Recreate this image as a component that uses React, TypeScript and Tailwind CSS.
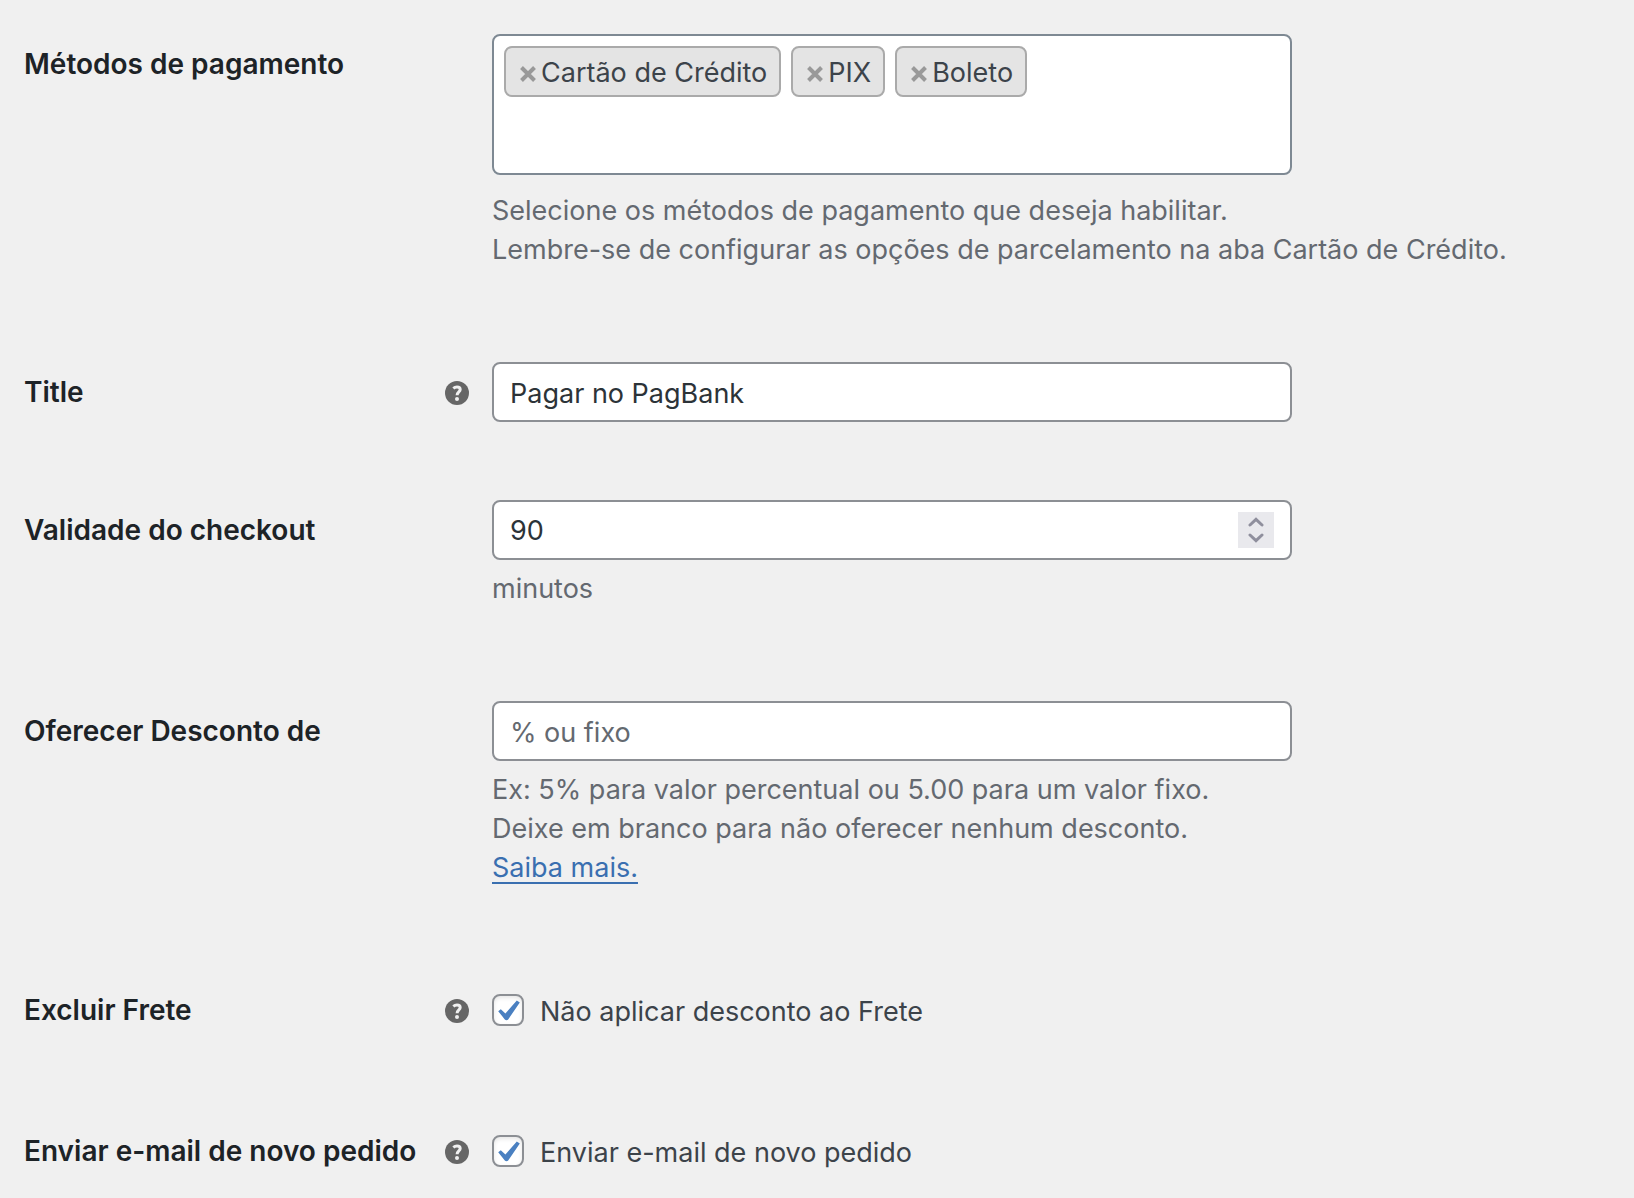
import { useState } from 'react';
import type { ReactNode } from 'react';

interface SettingRowProps {
  label: string;
  htmlFor: string;
  help?: boolean;
  children: ReactNode;
}

interface CheckSettingProps {
  id: string;
  title: string;
  label: string;
}

function HelpIcon() {
  return (
    <svg viewBox="0 0 24 24" className="w-6 h-6" aria-hidden="true">
      <circle cx="12" cy="12" r="12" fill="#666666" />
      <path
        d="M8.3 7.4C9.4 6.5 10.6 6.1 12 6.1C14 6.1 15.2 7 15.2 8.5C15.2 10.9 12.1 10.9 12.1 14.2"
        fill="none"
        stroke="#f0f0f0"
        strokeWidth="3"
      />
      <circle cx="12" cy="17.9" r="2" fill="#f0f0f0" />
    </svg>
  );
}

function SettingRow({ label, htmlFor, help, children }: SettingRowProps) {
  return (
    <div className="grid grid-cols-[468px_minmax(0,1fr)]">
      <div className="flex items-start justify-between pr-[23px]">
        <label htmlFor={htmlFor} className="pt-3 text-[28px] leading-9 font-semibold text-[#1d2327]">
          {label}
        </label>
        {help && (
          <button type="button" aria-label="Ajuda" className="pt-[19px]">
            <HelpIcon />
          </button>
        )}
      </div>
      <div>{children}</div>
    </div>
  );
}

function Description({ children }: { children: ReactNode }) {
  return <p className="pt-[9px] pb-[15px] leading-[39px] text-[#646970]">{children}</p>;
}

function CheckSetting({ id, title, label }: CheckSettingProps) {
  const [checked, setChecked] = useState(true);

  return (
    <SettingRow label={title} htmlFor={id} help>
      <div className="flex h-[63px] items-start gap-4 pt-[14px]">
        <span className="grid shrink-0">
          <input
            id={id}
            type="checkbox"
            checked={checked}
            onChange={(e) => setChecked(e.target.checked)}
            className="col-start-1 row-start-1 w-8 h-8 appearance-none rounded-lg border-2 border-[#8c8f94] bg-white shadow-[inset_0_2px_4px_rgba(0,0,0,0.1)]"
          />
          {checked && (
            <svg viewBox="0 0 32 32" className="pointer-events-none col-start-1 row-start-1 w-8 h-8" aria-hidden="true">
              <path d="M6.2 17.2L8.8 15.2L13.4 19.6L24.8 6.4L27.8 8.6L16.2 25.4C15.4 26.4 13.6 26.4 12.8 25.4Z" fill="#4a80c1" />
            </svg>
          )}
        </span>
        <label htmlFor={id} className="leading-9 text-[#3c434a]">{label}</label>
      </div>
    </SettingRow>
  );
}

export default function App() {
  const [methods, setMethods] = useState(['Cartão de Crédito', 'PIX', 'Boleto']);
  const [title, setTitle] = useState('Pagar no PagBank');
  const [minutes, setMinutes] = useState(90);

  return (
    <div className="min-h-screen bg-[#f0f0f0] font-['Inter',sans-serif] text-[27px] text-[#3c434a]">
      <form className="flex flex-col gap-[78px] pt-[34px] pl-6">
        <SettingRow label="Métodos de pagamento" htmlFor="methods">
          <div className="flex min-h-[141px] w-full max-w-[800px] flex-wrap content-start gap-[10px] rounded-lg border-2 border-[#7e8993] bg-white p-[10px]">
            {methods.map((method) => (
              <span key={method} className="flex h-[51px] items-center gap-1 rounded-lg border-2 border-[#aaaaaa] bg-[#e4e4e4] pt-1 pl-[13px] pr-3">
                <button
                  type="button"
                  aria-label={`Remover ${method}`}
                  onClick={() => setMethods(methods.filter((m) => m !== method))}
                >
                  <svg viewBox="0 0 18 18" className="w-[18px] h-[18px]" aria-hidden="true">
                    <path d="M2.5 2.5L15.5 15.5M15.5 2.5L2.5 15.5" stroke="#999999" strokeWidth="4" />
                  </svg>
                </button>
                {method}
              </span>
            ))}
            <input id="methods" type="text" className="h-[51px] w-5 outline-none" />
          </div>
          <div className="pt-[7px]">
            <Description>
              Selecione os métodos de pagamento que deseja habilitar.
              <br />
              Lembre-se de configurar as opções de parcelamento na aba Cartão de Crédito.
            </Description>
          </div>
        </SettingRow>

        <SettingRow label="Title" htmlFor="title" help>
          <input
            id="title"
            type="text"
            value={title}
            onChange={(e) => setTitle(e.target.value)}
            className="block h-[60px] w-full max-w-[800px] rounded-lg border-2 border-[#8c8f94] bg-white px-4 pt-0.5 text-[#2c3338]"
          />
        </SettingRow>

        <SettingRow label="Validade do checkout" htmlFor="validity">
          <div className="flex h-[60px] w-full max-w-[800px] items-center rounded-lg border-2 border-[#8c8f94] bg-white px-4">
            <input
              id="validity"
              type="number"
              value={minutes}
              onChange={(e) => setMinutes(Number(e.target.value))}
              className="min-w-0 flex-1 pt-0.5 text-[#2c3338] outline-none [appearance:textfield] [&::-webkit-inner-spin-button]:appearance-none"
            />
            <div className="flex w-9 h-9 flex-col bg-[#e9e9ed] text-[#8f8f9d]">
              <button type="button" aria-label="Aumentar" onClick={() => setMinutes(minutes + 1)} className="flex h-[18px] justify-center">
                <svg viewBox="0 0 16 18" className="w-4 h-[18px]" aria-hidden="true">
                  <path d="M2 13L8 7.4L14 13" fill="none" stroke="currentColor" strokeWidth="3" strokeLinecap="round" />
                </svg>
              </button>
              <button type="button" aria-label="Diminuir" onClick={() => setMinutes(minutes - 1)} className="flex h-[18px] justify-center">
                <svg viewBox="0 0 16 18" className="w-4 h-[18px]" aria-hidden="true">
                  <path d="M2 5L8 10.6L14 5" fill="none" stroke="currentColor" strokeWidth="3" strokeLinecap="round" />
                </svg>
              </button>
            </div>
          </div>
          <Description>minutos</Description>
        </SettingRow>

        <SettingRow label="Oferecer Desconto de" htmlFor="discount">
          <input
            id="discount"
            type="text"
            placeholder="% ou fixo"
            className="block h-[60px] w-full max-w-[800px] rounded-lg border-2 border-[#8c8f94] bg-white px-4 pt-0.5 text-[#2c3338] placeholder:text-[#646970]"
          />
          <Description>
            Ex: 5% para valor percentual ou 5.00 para um valor fixo.
            <br />
            Deixe em branco para não oferecer nenhum desconto.
            <br />
            <a href="#saiba-mais" className="text-[#3a6fb0] underline decoration-2 underline-offset-[5px]">Saiba mais.</a>
          </Description>
        </SettingRow>

        <CheckSetting id="exclude-shipping" title="Excluir Frete" label="Não aplicar desconto ao Frete" />
        <CheckSetting id="new-order-email" title="Enviar e-mail de novo pedido" label="Enviar e-mail de novo pedido" />
      </form>
    </div>
  );
}
